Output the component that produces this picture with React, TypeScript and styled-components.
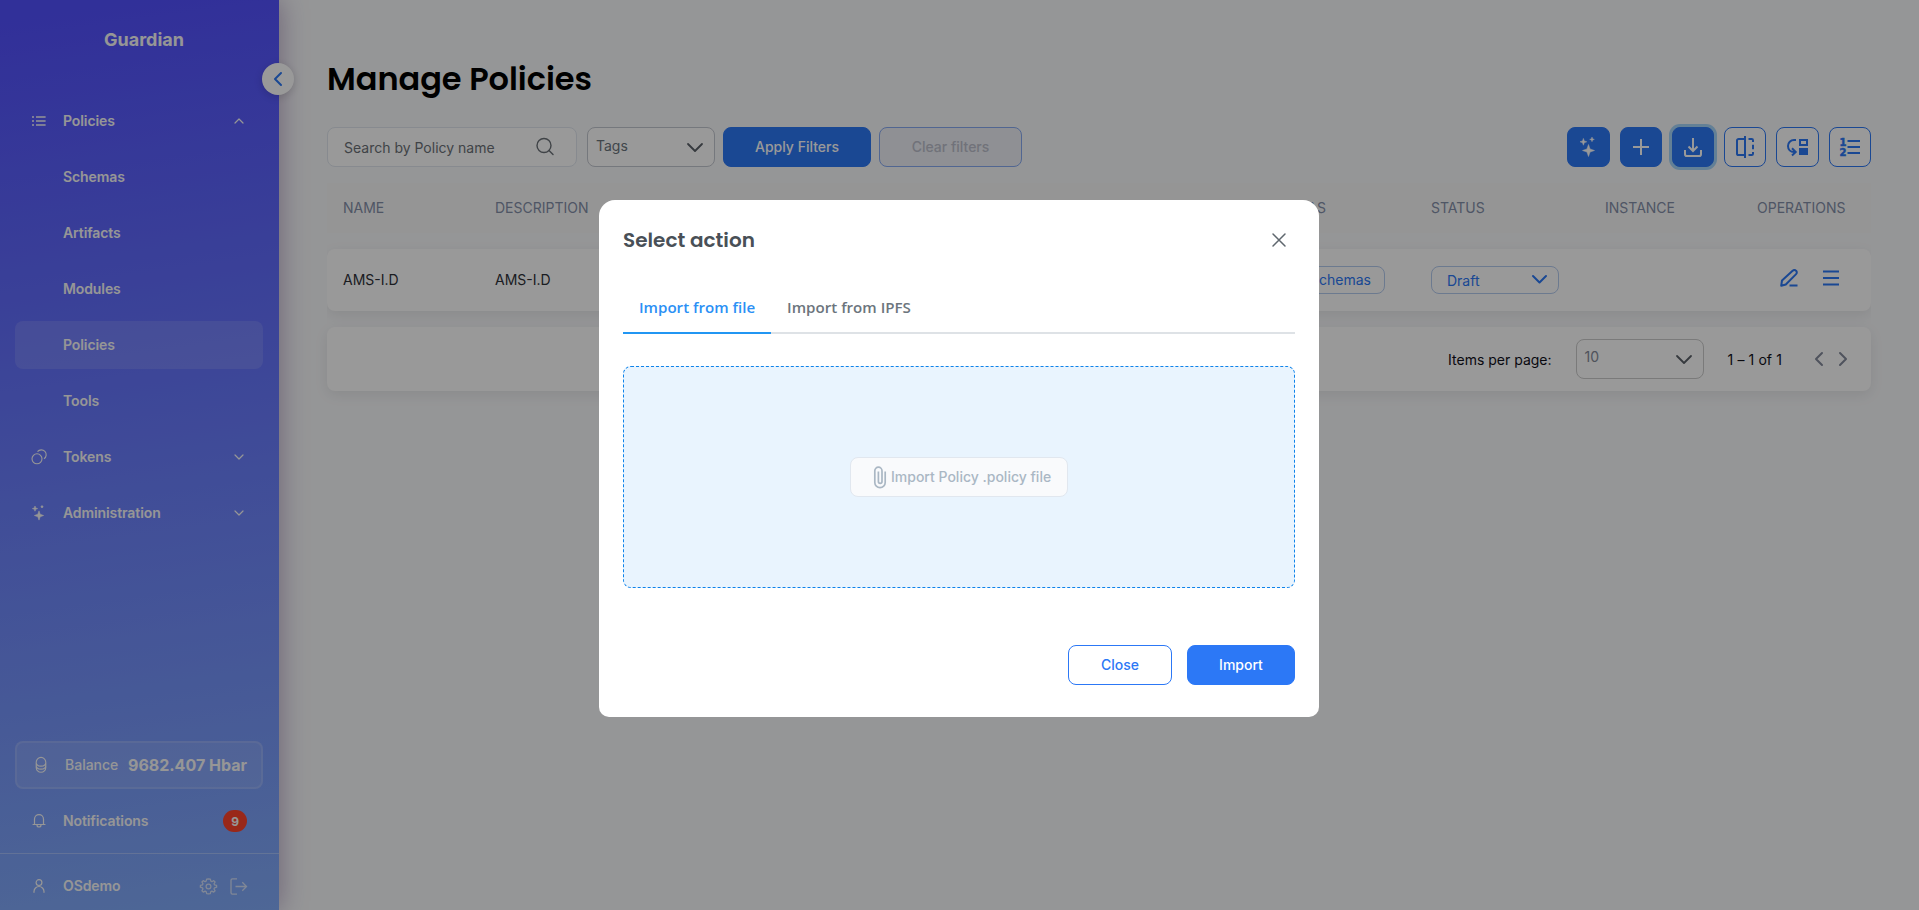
import React from "react";
import styled, { createGlobalStyle, css } from "styled-components";

const GlobalStyle = createGlobalStyle`
  * { box-sizing: border-box; }
  html, body { margin: 0; padding: 0; height: 100%; overflow: hidden; }
  body { background: #f9fafc; font-family: Inter, "Liberation Sans", sans-serif; font-size: 14px; color: #2e3038; }
  button { font: inherit; margin: 0; padding: 0; border: 0; background: none; }
  svg { display: block; flex: none; overflow: visible; }
`;

const Page = styled.div`
  display: flex;
  width: 100vw;
  height: 100vh;
`;

/* ---------- Sidebar ---------- */

const Sidebar = styled.aside`
  position: relative;
  z-index: 1;
  flex: none;
  width: 279px;
  height: 100%;
  display: flex;
  flex-direction: column;
  color: #fafafa;
  background: linear-gradient(352deg, #82acfb 0%, #5350ff 98%);
  box-shadow: 0 0 26px rgba(74, 30, 112, 0.4);
`;

const Brand = styled.div`
  height: 97px;
  padding: 29px 0 0 9px;
  text-align: center;
  font-size: 18px;
  line-height: 22px;
  font-weight: 700;
`;

const Collapse = styled.button`
  position: absolute;
  top: 63px;
  right: -15px;
  width: 32px;
  height: 32px;
  border-radius: 50%;
  background: #fff;
  display: grid;
  place-items: center;
  box-shadow: 0 2px 8px rgba(0, 0, 0, 0.16);
`;

const Menu = styled.nav`
  flex: 1;
  display: flex;
  flex-direction: column;
  gap: 8px;
  padding: 0 16px 0 15px;
`;

const MenuRow = styled.div<{ $active?: boolean; $inset?: number }>`
  height: 48px;
  display: grid;
  grid-template-columns: 48px 1fr auto;
  align-items: center;
  padding-right: ${(p) => p.$inset ?? 16}px;
  border-radius: 8px;
  font-weight: 600;
  letter-spacing: -0.1px;
  background: ${(p) => (p.$active ? "rgba(255, 255, 255, 0.12)" : "transparent")};
`;

const MenuLabel = styled.span`
  padding-bottom: 2px;
`;

const MenuIcon = styled.span`
  padding-left: 16px;
`;

const BottomMenu = styled.div`
  display: flex;
  flex-direction: column;
  gap: 8px;
  padding: 0 16px 8px 15px;
`;

const Balance = styled.div`
  height: 48px;
  display: grid;
  grid-template-columns: 48px 1fr auto;
  align-items: center;
  padding-right: 14px;
  border: 2px solid rgba(255, 255, 255, 0.13);
  border-radius: 8px;
  background: rgba(255, 255, 255, 0.1);
  font-weight: 500;
`;

const Amount = styled.strong`
  font-size: 16px;
  font-weight: 700;
`;

const Badge = styled.span`
  width: 24px;
  height: 22px;
  border-radius: 11px;
  background: #ff432a;
  display: grid;
  place-items: center;
  font-size: 12px;
  font-weight: 700;
`;

const UserBar = styled.div`
  height: 57px;
  border-top: 1px solid rgba(255, 255, 255, 0.3);
  padding: 8px 16px 0 15px;
`;

const UserActions = styled.div`
  display: flex;
  gap: 13px;
  opacity: 0.7;
`;

/* ---------- Main area ---------- */

const Main = styled.main`
  flex: 1;
  padding: 59px 48px 0;
`;

const Title = styled.h1`
  margin: 0;
  height: 68px;
  font-family: Poppins, Inter, sans-serif;
  font-size: 32px;
  line-height: 40px;
  font-weight: 600;
  letter-spacing: -0.03px;
  color: #000;
`;

const Toolbar = styled.div`
  height: 40px;
  display: flex;
  align-items: stretch;
`;

const Search = styled.div`
  width: 250px;
  display: flex;
  justify-content: space-between;
  align-items: center;
  padding: 0 22px 2px 16px;
  margin-right: 10px;
  border: 1px solid #e1e7ef;
  border-radius: 8px;
  background: #fff;
  color: #6b7177;
  line-height: 16px;
  span { padding-top: 4px; }
`;

const Select = styled.div<{ $tone: "grey" | "blue" | "page" }>`
  width: 128px;
  height: 40px;
  display: flex;
  justify-content: space-between;
  align-items: center;
  padding: 0 12px 3px 8px;
  border: 1px solid #c4c8d0;
  border-radius: 8px;
  background: #fff;
  color: #6c757d;
  svg { margin-top: 4px; }
  ${(p) =>
    p.$tone === "blue" &&
    css`
      height: 28px;
      padding: 1px 12px 0 15px;
      border-color: #b5cbef;
      color: #2c78f6;
      svg { margin: 0 0 2px; }
    `}
  ${(p) =>
    p.$tone === "page" &&
    css`
      padding-bottom: 6px;
      border-color: #cbcbcb;
      color: #848a99;
      svg { margin-top: 6px; }
    `}
`;

const TextButton = styled.button<{ $kind: "solid" | "outline" | "disabled"; $width: number }>`
  width: ${(p) => p.$width}px;
  height: 40px;
  padding-bottom: 1px;
  border-radius: 8px;
  font-weight: 500;
  border: 1px solid #2c78f6;
  color: ${(p) => (p.$kind === "solid" ? "#fff" : "#2c78f6")};
  background: ${(p) => (p.$kind === "solid" ? "#2c78f6" : "#fff")};
  ${(p) =>
    p.$kind === "disabled" &&
    css`
      color: #bcbfcb;
      background: #eef0f7;
      border-color: #87aaf2;
    `}
`;

const Filters = styled.div`
  display: flex;
  gap: 8px;
`;

const IconActions = styled.div`
  margin-left: auto;
  display: flex;
  gap: 10px;
`;

const IconButton = styled.button<{ $solid?: boolean; $focus?: boolean; $wide?: boolean }>`
  width: ${(p) => (p.$wide ? 43 : 42)}px;
  height: 40px;
  display: grid;
  place-items: center;
  border: 1px solid #2c78f6;
  border-radius: 8px;
  color: ${(p) => (p.$solid ? "#fff" : "#2c78f6")};
  background: ${(p) => (p.$solid ? "#2c78f6" : "#fff")};
  box-shadow: ${(p) => (p.$focus ? "0 0 0 3px #a6d5fa" : "none")};
`;

const Table = styled.section`
  margin-top: 16px;
  overflow: hidden;
  padding-bottom: 16px;
`;

const tableColumns = css`
  display: grid;
  grid-template-columns: 152px 735px 201px 174px 152px 1fr;
  padding-left: 16px;
  align-items: center;
`;

const TableHead = styled.div`
  ${tableColumns}
  height: 50px;
  background: #f9f9f9;
  color: #848fa9;
`;

const HeadCell = styled.div<{ $end?: boolean }>`
  line-height: 20px;
  ${(p) => p.$end && "justify-self: end; padding-right: 105px;"}
`;

const TableRow = styled.div`
  ${tableColumns}
  margin-top: 16px;
  height: 62px;
  border-radius: 8px;
  background: #fff;
  box-shadow: 0 4px 14px rgba(0, 0, 0, 0.08);
`;

const SchemasButton = styled.button`
  height: 28px;
  padding: 0 13px 1px;
  border: 1px solid #b5cbef;
  border-radius: 8px;
  color: #2c78f6;
`;

const Cell = styled.div`
  padding-bottom: 1px;
`;

const SchemaCell = styled.div`
  justify-self: end;
  padding-right: 46px;
`;

const RowActions = styled.div`
  display: flex;
  align-items: center;
  gap: 25px;
  padding: 0 0 4px 23px;
  color: #2c78f6;
`;

const Paginator = styled.div`
  height: 64px;
  display: flex;
  align-items: center;
  justify-content: flex-end;
  padding-right: 25px;
  border-radius: 8px;
  background: #fff;
  box-shadow: 0 4px 14px rgba(0, 0, 0, 0.08);
`;

const PageLabel = styled.span<{ $count?: boolean }>`
  margin: 0 24px;
  color: #0f0f1a;
  letter-spacing: ${(p) => (p.$count ? "0.1px" : "0")};
`;

const Pager = styled.div`
  display: flex;
  gap: 18px;
  margin-left: 10px;
  color: #848a9c;
`;

/* ---------- Dialog ---------- */

const Overlay = styled.div`
  position: fixed;
  inset: 0;
  z-index: 2;
  padding: 200px 1px 0 0;
  background: rgba(0, 0, 0, 0.4);
`;

const Dialog = styled.div`
  width: 720px;
  height: 517px;
  margin: 0 auto;
  padding: 24px;
  display: flex;
  flex-direction: column;
  border-radius: 16px 16px 10px 10px;
  background: #fff;
`;

const DialogHeader = styled.header`
  display: flex;
  justify-content: space-between;
  align-items: center;
  height: 32px;
  padding-right: 9px;
`;

const DialogTitle = styled.h2`
  margin: 0;
  font-family: Poppins, Inter, sans-serif;
  font-size: 20px;
  font-weight: 600;
  color: #495057;
`;

const Tabs = styled.div`
  display: flex;
  height: 54px;
  margin-top: 24px;
  border-bottom: 2px solid #dee2e6;
`;

const Tab = styled.button<{ $active?: boolean }>`
  height: 54px;
  padding: 1px 16px 0;
  border-bottom: 2px solid ${(p) => (p.$active ? "#2196f3" : "transparent")};
  color: ${(p) => (p.$active ? "#2b90f5" : "#6c757d")};
  font-family: "Open Sans", "Noto Sans", sans-serif;
  font-size: 15.1px;
  font-weight: 600;
`;

const DropZone = styled.div`
  height: 222px;
  margin-top: 32px;
  display: grid;
  place-items: center;
  border: 1px dashed #0f83ea;
  border-radius: 8px;
  background: #e9f4fe;
`;

const FileButton = styled.button`
  width: 218px;
  height: 40px;
  display: flex;
  align-items: center;
  gap: 4px;
  padding-left: 22px;
  border: 1px solid #e1e7ef;
  border-radius: 8px;
  background: #f9fafc;
  color: #aab7c4;
  font-weight: 500;
  white-space: nowrap;
  span { padding-bottom: 1px; }
`;

const DialogFooter = styled.footer`
  display: flex;
  justify-content: flex-end;
  gap: 15px;
  margin-top: 57px;
`;

/* ---------- Icons ---------- */

type ChevronProps = { dir: "up" | "down" | "left" | "right"; long: number; stroke: number; color?: string };

const Chevron = ({ dir, long, stroke, color = "currentColor" }: ChevronProps) => {
  const short = long / 2;
  const points = {
    down: `0,0 ${short},${short} ${long},0`,
    up: `0,${short} ${short},0 ${long},${short}`,
    left: `${short},0 0,${short} ${short},${long}`,
    right: `0,0 ${short},${short} 0,${long}`,
  }[dir];
  const vertical = dir === "left" || dir === "right";
  return (
    <svg width={vertical ? short : long} height={vertical ? long : short}>
      <polyline points={points} fill="none" stroke={color} strokeWidth={stroke} strokeLinecap="round" strokeLinejoin="round" />
    </svg>
  );
};

const ListIcon = () => (
  <svg width="16" height="16" fill="currentColor" opacity="0.75">
    <path d="M1 3h2v2H1zM1 7h2v2H1zM1 11h2v2H1zM5 3h9.600v2H5zM5 7h9.600v2H5zM5 11h9.600v2H5z" />
  </svg>
);

const TokensIcon = () => (
  <svg width="16" height="16" fill="none" stroke="currentColor" strokeWidth="1.100">
    <circle cx="6" cy="9.800" r="5" />
    <path d="M6.500 2.600A4.900 4.900 0 1 1 13 9.800" />
  </svg>
);

const star = (x: number, y: number, r: number) => {
  const k = r * 0.26;
  return `M${x} ${y - r}L${x + k} ${y - k}L${x + r} ${y}L${x + k} ${y + k}L${x} ${y + r}L${x - k} ${y + k}L${x - r} ${y}L${x - k} ${y - k}Z`;
};

const SmallSparkles = () => (
  <svg width="16" height="16" fill="currentColor" stroke="currentColor" strokeWidth="0.600" strokeLinejoin="round">
    <path d={star(8, 10.5, 4.6) + star(4, 3.6, 2.6)} />
    <circle cx="11" cy="1.700" r="1" />
  </svg>
);

const Sparkles = () => (
  <svg width="20" height="20" fill="currentColor" stroke="currentColor" strokeWidth="0.500" strokeLinejoin="round">
    <path d={star(9.5, 13.5, 6) + star(4.4, 4.8, 3.4) + star(13, 2.4, 2.3)} />
  </svg>
);

const CoinsIcon = () => (
  <svg width="16" height="16" fill="none" stroke="currentColor" strokeWidth="1.100">
    <path d="M3.200 5.200a4.800 4.800 0 0 1 9.600 0v5.300a4.800 4.800 0 0 1-9.600 0zM3.200 5.200c0 5.200 9.600 5.200 9.600 0M3.200 8.200c0 5.200 9.600 5.200 9.600 0" />
  </svg>
);

const BellIcon = () => (
  <svg width="16" height="16" fill="none" stroke="currentColor" strokeWidth="1.200" strokeLinecap="round">
    <path d="M3.500 11.500V6.200a4.500 4.500 0 0 1 9 0v5.300M2 11.500h12M6 12a2 2 0 0 0 4 0" />
  </svg>
);

const UserIcon = () => (
  <svg width="16" height="16" fill="none" stroke="currentColor" strokeWidth="1.200" strokeLinecap="round">
    <circle cx="8" cy="4.600" r="2.900" />
    <path d="M3 14.300v-.8a5 5 0 0 1 10 0v.8" />
  </svg>
);

const GearIcon = () => (
  <svg width="17" height="17" viewBox="0 0 24 24" fill="none" stroke="currentColor" strokeWidth="1.800" strokeLinejoin="round">
    <circle cx="12" cy="12" r="3.400" />
    <path d="M12 1.200l2.600.4.700 2.900 1.500.700 2.600-1.500 1.900 1.900-1.500 2.600.700 1.500 2.900.700.100 2.600-3 .9-.7 1.600 1.500 2.600-1.900 1.900-2.600-1.500-1.500.7-.7 2.900-2.600.4-2.600-.4-.7-2.900-1.500-.7-2.600 1.500-1.900-1.900 1.500-2.600-.7-1.600-3-.9.100-2.600 2.900-.7.700-1.500-1.500-2.600 1.900-1.900 2.600 1.500 1.500-.7.700-2.900z" />
  </svg>
);

const LogoutIcon = () => (
  <svg width="17" height="17" fill="none" stroke="currentColor" strokeWidth="1.300">
    <path d="M7 .8H2.400A1.400 1.400 0 0 0 1 2.200v12.600a1.400 1.400 0 0 0 1.400 1.400H7M5.500 8.500h11M12.300 4.300l4.200 4.200-4.200 4.200" />
  </svg>
);

const SearchIcon = () => (
  <svg width="18" height="18" fill="none" stroke="#6b7177" strokeWidth="1.400" strokeLinecap="round">
    <circle cx="8" cy="8.500" r="7" />
    <path d="M13 13.500l4 4" />
  </svg>
);

const PlusIcon = () => (
  <svg width="16" height="16" stroke="currentColor" strokeWidth="2">
    <path d="M8 0v16M0 8h16" />
  </svg>
);

const DownloadIcon = () => (
  <svg width="18" height="19" fill="none" stroke="currentColor" strokeWidth="2">
    <path d="M9 0v13M4.500 8.500L9 13l4.500-4.500M1 12v4.200a1.800 1.800 0 0 0 1.800 1.800h12.400a1.800 1.800 0 0 0 1.800-1.800V12" />
  </svg>
);

const CompareIcon = () => (
  <svg width="18" height="22" fill="none" stroke="currentColor" strokeWidth="2">
    <path d="M9 3H2.600A1.600 1.600 0 0 0 1 4.600v12.800A1.600 1.600 0 0 0 2.600 19H9M9 0v22M12.500 3h3.200A1.300 1.300 0 0 1 17 4.300V6M17 8.800v4.400M17 16v1.700a1.300 1.300 0 0 1-1.300 1.300h-3.200" />
  </svg>
);

const MoveIcon = () => (
  <svg width="22" height="18" fill="none" stroke="currentColor" strokeWidth="2">
    <path d="M9 2H7a6 6 0 0 0-6 6c0 3.500 2.500 6 6 6h1M5 10.300l3.700 3.700L5 17.500M13 2h7v5h-7z" />
    <path d="M12 10h9v7h-9z" fill="currentColor" stroke="none" />
  </svg>
);

const NumberedListIcon = () => (
  <svg width="20" height="20" fill="none" stroke="currentColor" strokeWidth="2">
    <path d="M7.500 4H20M7.500 10H20M7.500 16H20" />
    <g fill="currentColor" stroke="currentColor" strokeWidth="0.500" fontFamily="DejaVu Sans" fontSize="10" fontWeight="700">
      <text x="-0.500" y="8.500">1</text>
      <text x="-0.500" y="18.500">2</text>
    </g>
  </svg>
);

const PencilIcon = () => (
  <svg width="18" height="18" fill="none" stroke="currentColor" strokeWidth="2" strokeLinejoin="round">
    <path d="M1.200 16.800l.8-5.300L12.600 1.800a2.300 2.300 0 0 1 3.500 0 2.300 2.300 0 0 1 0 3.300L5.800 15.500zM9.500 16.500h8" />
  </svg>
);

const RowsIcon = () => (
  <svg width="16" height="16" stroke="currentColor" strokeWidth="2">
    <path d="M0 1.500h16M0 8h16M0 14.500h16" />
  </svg>
);

const CloseIcon = () => (
  <svg width="14" height="14" fill="none" stroke="#5f676e" strokeWidth="1.500" strokeLinecap="round">
    <path d="M1 1l12 12M13 1L1 13" />
  </svg>
);

const ClipIcon = () => (
  <svg width="14" height="23" fill="none" stroke="currentColor" strokeWidth="1.700">
    <path d="M12.200 5.500v11a5.200 5.200 0 0 1-10.400 0V4.800a3.600 3.600 0 0 1 7.200 0v10.700a1.800 1.800 0 0 1-3.600 0V5.500" />
  </svg>
);

/* ---------- App ---------- */

type MenuItem = { label: string; icon?: React.ReactNode; arrow?: "up" | "down"; active?: boolean };

const menu: MenuItem[] = [
  { label: "Policies", icon: <ListIcon />, arrow: "up" },
  { label: "Schemas" },
  { label: "Artifacts" },
  { label: "Modules" },
  { label: "Policies", active: true },
  { label: "Tools" },
  { label: "Tokens", icon: <TokensIcon />, arrow: "down" },
  { label: "Administration", icon: <SmallSparkles />, arrow: "down" },
];

export default function App() {
  return (
    <>
      <GlobalStyle />
      <Page>
        <Sidebar>
          <Brand>Guardian</Brand>
          <Collapse>
            <Chevron dir="left" long={12} stroke={2} color="#2c78f6" />
          </Collapse>
          <Menu>
            {menu.map((item, i) => (
              <MenuRow key={i} $active={item.active} $inset={20}>
                <MenuIcon>{item.icon}</MenuIcon>
                <MenuLabel>{item.label}</MenuLabel>
                {item.arrow && <Chevron dir={item.arrow} long={8} stroke={1.2} />}
              </MenuRow>
            ))}
          </Menu>
          <BottomMenu>
            <Balance>
              <MenuIcon><CoinsIcon /></MenuIcon>
              <MenuLabel>Balance</MenuLabel>
              <Amount>9682.407 Hbar</Amount>
            </Balance>
            <MenuRow>
              <MenuIcon><BellIcon /></MenuIcon>
              <MenuLabel>Notifications</MenuLabel>
              <Badge>9</Badge>
            </MenuRow>
          </BottomMenu>
          <UserBar>
            <MenuRow>
              <MenuIcon><UserIcon /></MenuIcon>
              <MenuLabel>OSdemo</MenuLabel>
              <UserActions>
                <GearIcon />
                <LogoutIcon />
              </UserActions>
            </MenuRow>
          </UserBar>
        </Sidebar>

        <Main>
          <Title>Manage Policies</Title>
          <Toolbar>
            <Search>
              <span>Search by Policy name</span>
              <SearchIcon />
            </Search>
            <Filters>
              <Select $tone="grey">
                Tags
                <Chevron dir="down" long={14} stroke={1.8} color="#5a6168" />
              </Select>
              <TextButton $kind="solid" $width={148}>Apply Filters</TextButton>
              <TextButton $kind="disabled" $width={143}>Clear filters</TextButton>
            </Filters>
            <IconActions>
              <IconButton $solid $wide><Sparkles /></IconButton>
              <IconButton $solid><PlusIcon /></IconButton>
              <IconButton $solid $focus><DownloadIcon /></IconButton>
              <IconButton><CompareIcon /></IconButton>
              <IconButton $wide><MoveIcon /></IconButton>
              <IconButton><NumberedListIcon /></IconButton>
            </IconActions>
          </Toolbar>

          <Table>
            <TableHead>
              <HeadCell>NAME</HeadCell>
              <HeadCell>DESCRIPTION</HeadCell>
              <HeadCell $end>SCHEMAS</HeadCell>
              <HeadCell>STATUS</HeadCell>
              <HeadCell>INSTANCE</HeadCell>
              <HeadCell>OPERATIONS</HeadCell>
            </TableHead>
            <TableRow>
              <Cell>AMS-I.D</Cell>
              <Cell>AMS-I.D</Cell>
              <SchemaCell>
                <SchemasButton>Schemas</SchemasButton>
              </SchemaCell>
              <Select $tone="blue">
                Draft
                <Chevron dir="down" long={13} stroke={2} />
              </Select>
              <Cell />
              <RowActions>
                <PencilIcon />
                <RowsIcon />
              </RowActions>
            </TableRow>
          </Table>

          <Paginator>
            <PageLabel>Items per page:</PageLabel>
            <Select $tone="page">
              10
              <Chevron dir="down" long={14} stroke={1.8} color="#5a6168" />
            </Select>
            <PageLabel $count>1 – 1 of 1</PageLabel>
            <Pager>
              <Chevron dir="left" long={12} stroke={2} />
              <Chevron dir="right" long={12} stroke={2} />
            </Pager>
          </Paginator>
        </Main>
      </Page>

      <Overlay>
        <Dialog>
          <DialogHeader>
            <DialogTitle>Select action</DialogTitle>
            <CloseIcon />
          </DialogHeader>
          <Tabs>
            <Tab $active>Import from file</Tab>
            <Tab>Import from IPFS</Tab>
          </Tabs>
          <DropZone>
            <FileButton>
              <ClipIcon />
              <span>Import Policy .policy file</span>
            </FileButton>
          </DropZone>
          <DialogFooter>
            <TextButton $kind="outline" $width={104}>Close</TextButton>
            <TextButton $kind="solid" $width={108}>Import</TextButton>
          </DialogFooter>
        </Dialog>
      </Overlay>
    </>
  );
}
